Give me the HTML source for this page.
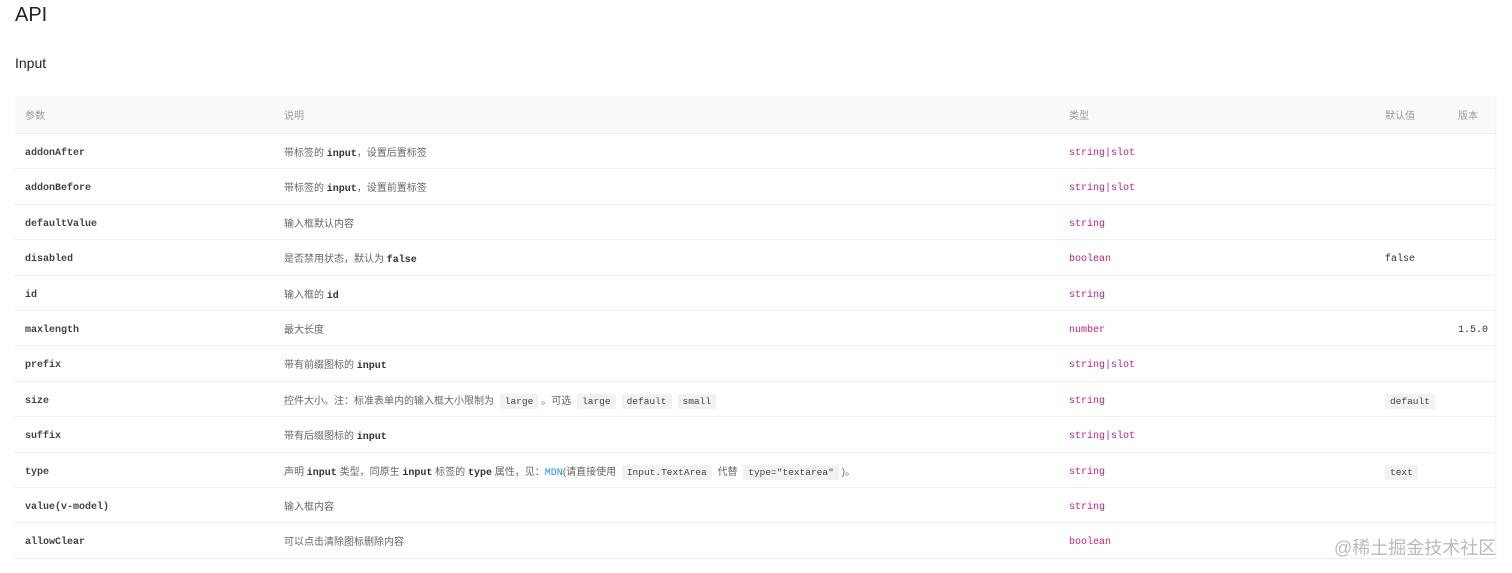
<!DOCTYPE html>
<html><head><meta charset="utf-8"><style>
*{margin:0;padding:0;box-sizing:border-box}
body{width:1512px;height:573px;background:#fff;position:relative;overflow:hidden;font-family:"Liberation Sans","Noto Sans CJK SC",sans-serif;color:#666}
h1{position:absolute;left:15px;top:4px;font-size:20px;font-weight:400;color:#222}
h2{position:absolute;left:15px;top:55px;font-size:14px;font-weight:400;color:#222}
.tbl{position:absolute;left:15px;top:97px;width:1480px;box-shadow:1px 0 2px rgba(0,0,0,.06)}
.r{position:relative;height:35.4px;border-bottom:1px solid #f0f0f0;font-size:10px;line-height:39px}
.h{height:37px;background:#fafafa;color:#999;line-height:39px}
.r>span{position:absolute;top:0;white-space:nowrap}
.c1{left:10px}.c2{left:269px}.c3{left:1054px}.c4{left:1370px}.c5{left:1443px}
.m{font-family:"Liberation Mono",monospace;color:#333}
.c1.m{font-weight:bold;color:#444}
.t{font-family:"Liberation Mono",monospace;color:#c41d7f}
code{font-family:"Liberation Mono",monospace;background:#f2f2f2;color:#444;padding:2px 5px;border-radius:2px;margin:0 3px;font-size:9.5px}
b{font-family:"Liberation Mono",monospace;color:#333;font-weight:bold}
a{color:#1890ff;font-family:"Liberation Mono",monospace}
.wm{position:absolute;left:1334px;top:534px;font-size:18px;color:#bbb;font-family:"Liberation Sans","Noto Sans CJK SC",sans-serif}
</style></head><body>
<h1>API</h1>
<h2>Input</h2>
<div class="tbl">
<div class="r h"><span class="c1">参数</span><span class="c2">说明</span><span class="c3">类型</span><span class="c4">默认值</span><span class="c5">版本</span></div>
<div class="r"><span class="c1 m">addonAfter</span><span class="c2">带标签的 <b>input</b>，设置后置标签</span><span class="c3 t">string|slot</span></div>
<div class="r"><span class="c1 m">addonBefore</span><span class="c2">带标签的 <b>input</b>，设置前置标签</span><span class="c3 t">string|slot</span></div>
<div class="r"><span class="c1 m">defaultValue</span><span class="c2">输入框默认内容</span><span class="c3 t">string</span></div>
<div class="r"><span class="c1 m">disabled</span><span class="c2">是否禁用状态，默认为 <b>false</b></span><span class="c3 t">boolean</span><span class="c4 m">false</span></div>
<div class="r"><span class="c1 m">id</span><span class="c2">输入框的 <b>id</b></span><span class="c3 t">string</span></div>
<div class="r"><span class="c1 m">maxlength</span><span class="c2">最大长度</span><span class="c3 t">number</span><span class="c5 m">1.5.0</span></div>
<div class="r"><span class="c1 m">prefix</span><span class="c2">带有前缀图标的 <b>input</b></span><span class="c3 t">string|slot</span></div>
<div class="r"><span class="c1 m">size</span><span class="c2">控件大小。注：标准表单内的输入框大小限制为 <code>large</code>。可选 <code>large</code><code>default</code><code>small</code></span><span class="c3 t">string</span><span class="c4"><code style="margin:0">default</code></span></div>
<div class="r"><span class="c1 m">suffix</span><span class="c2">带有后缀图标的 <b>input</b></span><span class="c3 t">string|slot</span></div>
<div class="r"><span class="c1 m">type</span><span class="c2">声明 <b>input</b> 类型，同原生 <b>input</b> 标签的 <b>type</b> 属性，见：<a>MDN</a>(请直接使用 <code>Input.TextArea</code> 代替 <code>type="textarea"</code>)。</span><span class="c3 t">string</span><span class="c4"><code style="margin:0">text</code></span></div>
<div class="r"><span class="c1 m">value(v-model)</span><span class="c2">输入框内容</span><span class="c3 t">string</span></div>
<div class="r"><span class="c1 m">allowClear</span><span class="c2">可以点击清除图标删除内容</span><span class="c3 t">boolean</span></div>
</div>
<div class="wm">@稀土掘金技术社区</div>
</body></html>
